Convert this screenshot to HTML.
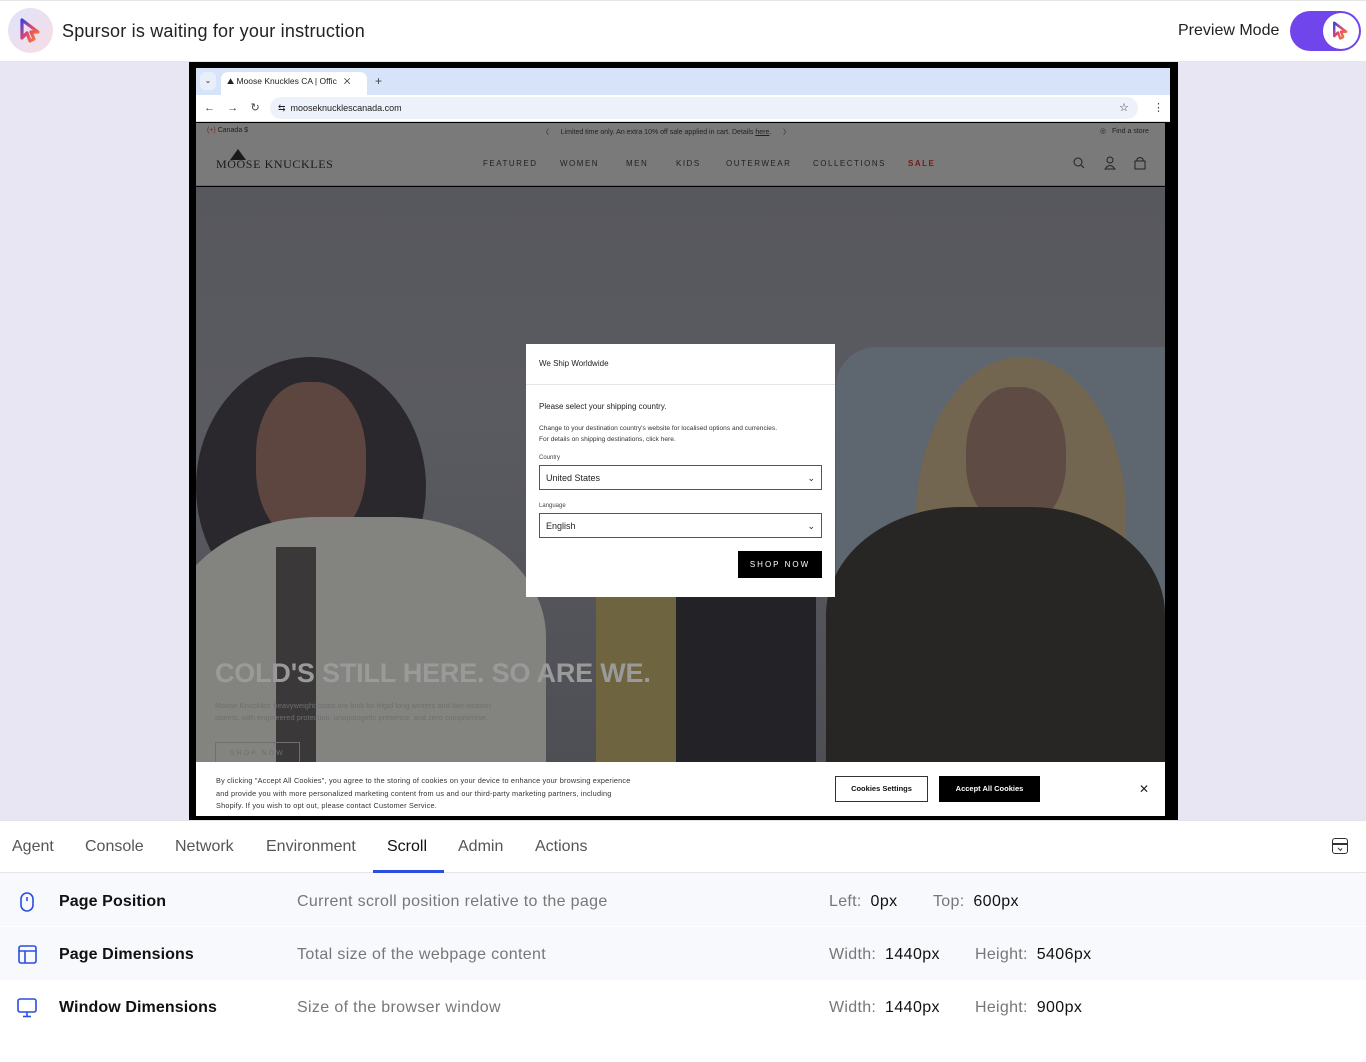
<!DOCTYPE html>
<html><head><meta charset="utf-8"><style>
*{box-sizing:border-box;margin:0;padding:0}
body{width:1366px;height:1062px;overflow:hidden;background:#fff;font-family:"Liberation Sans",sans-serif;position:relative}
.a{position:absolute}
.top{left:0;top:0;width:1366px;height:62px;background:#fff;border-top:1px solid #e5e5e5;border-bottom:1px solid #e6e6ea}
.lav{left:0;top:62px;width:1366px;height:758px;background:#e9e6f3}
.frame{left:189px;top:62px;width:989px;height:758px;background:#000}
.nav span{position:absolute;top:159px;font-size:8px;letter-spacing:1.5px;color:#222}
.tabs span{position:absolute;top:838px;font-size:16px;color:#555}
.row{left:0;width:1366px;height:53px}
.t{font-size:16px;font-weight:bold;color:#111;letter-spacing:.1px}
.d{font-size:16px;color:#777;letter-spacing:.35px}
.k{font-size:16px;color:#777;letter-spacing:.3px}
.v{font-size:16px;color:#111;letter-spacing:.4px}
</style></head><body>
<div class="a top"></div>
<div class="a" style="left:8px;top:8px;width:45px;height:45px;border-radius:50%;background:linear-gradient(135deg,#dfe3fb,#f7dde3)"></div>
<svg class="a" style="left:19px;top:18px" width="24" height="26" viewBox="0 0 24 26"><defs><linearGradient id="g" x1="0" y1="0" x2="1" y2="1"><stop offset="0" stop-color="#3b3fe0"/><stop offset=".5" stop-color="#e8456a"/><stop offset="1" stop-color="#f08a30"/></linearGradient></defs><path d="M3 2 L3 20 L8 15 L11 23 L15 21 L12 14 L19 14 Z" fill="none" stroke="url(#g)" stroke-width="3.2" stroke-linejoin="round"/></svg>
<div class="a" style="left:62px;top:21px;font-size:18px;color:#222;letter-spacing:.2px">Spursor is waiting for your instruction</div>
<div class="a" style="left:1178px;top:22px;font-size:16px;color:#222">Preview Mode</div>
<div class="a" style="left:1290px;top:11px;width:71px;height:40px;border-radius:20px;background:#7046ec"></div>
<div class="a" style="left:1323px;top:13px;width:36px;height:36px;border-radius:50%;background:#fff"></div>
<svg class="a" style="left:1332px;top:21px" width="18" height="20" viewBox="0 0 24 26"><path d="M3 2 L3 20 L8 15 L11 23 L15 21 L12 14 L19 14 Z" fill="none" stroke="url(#g)" stroke-width="3.2" stroke-linejoin="round"/></svg>

<div class="a lav"></div>
<div class="a frame"></div>
<div class="a" style="left:196px;top:68px;width:974px;height:27px;background:#d7e3f8"></div>
<div class="a" style="left:200px;top:72px;width:16px;height:18px;border-radius:5px;background:#e8effb;font-size:8px;text-align:center;line-height:18px;color:#333">⌄</div>
<div class="a" style="left:221px;top:72px;width:146px;height:23px;background:#fff;border-radius:7px 7px 0 0"></div>
<div class="a" style="left:227px;top:76px;font-size:8.5px;color:#222">⛰ Moose Knuckles CA | Offic&nbsp;&nbsp; ✕</div>
<div class="a" style="left:375px;top:74px;font-size:12px;color:#444">+</div>
<div class="a" style="left:196px;top:95px;width:974px;height:27px;background:#fff;border-bottom:1px solid #ddd"></div>
<div class="a" style="left:204px;top:101px;font-size:11px;color:#444">←&nbsp;&nbsp;&nbsp;&nbsp;→&nbsp;&nbsp;&nbsp;&nbsp;↻</div>
<div class="a" style="left:270px;top:97px;width:868px;height:22px;border-radius:11px;background:#edf1fa"></div>
<div class="a" style="left:278px;top:103px;font-size:9px;color:#222">⇆&nbsp;&nbsp;mooseknucklescanada.com</div>
<div class="a" style="left:1119px;top:101px;font-size:11px;color:#333">☆</div>
<div class="a" style="left:1153px;top:101px;font-size:11px;color:#444">⋮</div>
<div class="a" style="left:196px;top:123px;width:969px;height:17px;background:#7a7a7a"></div>
<div class="a" style="left:207px;top:127px;font-size:7px;color:#222"><span style="color:#8a1c1c">(+)</span> Canada $</div>
<div class="a" style="left:542px;top:127px;font-size:7px;color:#222">〈&nbsp;&nbsp;&nbsp;&nbsp;&nbsp; Limited time only. An extra 10% off sale applied in cart. Details <u>here</u>.&nbsp;&nbsp;&nbsp;&nbsp;&nbsp; 〉</div>
<div class="a" style="left:1100px;top:127px;font-size:7px;color:#222">◎&nbsp;&nbsp; Find a store</div>
<div class="a" style="left:196px;top:140px;width:969px;height:46px;background:#7a7a7a;border-bottom:1px solid #666"></div>
<div class="a" style="left:216px;top:157px;font-family:'Liberation Serif',serif;font-size:12px;color:#1a1a1a;letter-spacing:.6px">MOOSE KNUCKLES</div>
<div class="a" style="left:230px;top:149px;width:0;height:0;border-left:8px solid transparent;border-right:8px solid transparent;border-bottom:11px solid #1a1a1a"></div>
<div class="nav">
<span style="left:483px">FEATURED</span><span style="left:560px">WOMEN</span><span style="left:626px">MEN</span><span style="left:676px">KIDS</span><span style="left:726px">OUTERWEAR</span><span style="left:813px">COLLECTIONS</span><span style="left:908px;color:#7a1818;font-weight:bold">SALE</span></div>
<svg class="a" style="left:1072px;top:156px" width="80" height="14" viewBox="0 0 80 14"><g fill="none" stroke="#222" stroke-width="1"><circle cx="6" cy="6" r="4"/><line x1="9" y1="9" x2="12" y2="12"/><circle cx="38" cy="4" r="3"/><path d="M33 13 Q38 6 43 13 Z"/><rect x="63" y="5" width="10" height="8"/><path d="M65 5 V3 Q68 0 71 3 V5"/></g></svg>
<div class="a" style="left:196px;top:187px;width:969px;height:575px;background:linear-gradient(#57585d,#5a5b61 40%,#4e4f54);overflow:hidden">
 <div class="a" style="left:640px;top:160px;width:340px;height:380px;background:#5e6670;border-radius:40px 0 0 0"></div>
 <div class="a" style="left:0;top:170px;width:230px;height:260px;border-radius:50%;background:#2a282d"></div>
 <div class="a" style="left:60px;top:195px;width:110px;height:160px;border-radius:45%;background:#5e4640"></div>
 <div class="a" style="left:-30px;top:330px;width:380px;height:300px;border-radius:40% 40% 0 0;background:#838480"></div>
 <div class="a" style="left:80px;top:360px;width:40px;height:230px;background:#3a3838"></div>
 <div class="a" style="left:400px;top:410px;width:90px;height:180px;background:#6e6440"></div>
 <div class="a" style="left:480px;top:400px;width:140px;height:200px;background:#232327"></div>
 <div class="a" style="left:720px;top:170px;width:210px;height:320px;border-radius:50% 50% 20% 20%;background:#726650"></div>
 <div class="a" style="left:770px;top:200px;width:100px;height:140px;border-radius:45%;background:#5e4c44"></div>
 <div class="a" style="left:630px;top:320px;width:339px;height:270px;border-radius:40% 40% 0 0;background:#282624"></div>
 <div class="a" style="left:19px;top:471px;font-size:27px;font-weight:bold;color:#9a9a9a;letter-spacing:-.2px">COLD'S STILL HERE. SO ARE WE.</div>
 <div class="a" style="left:19px;top:513px;font-size:7.5px;color:#6f6f6f;line-height:12px">Moose Knuckles' heavyweight coats are built for frigid long winters and late-season<br>storms, with engineered protection, unapologetic presence, and zero compromise.</div>
 <div class="a" style="left:19px;top:555px;width:85px;height:24px;border:1px solid #6f6f6f;font-size:7px;color:#6f6f6f;letter-spacing:2px;padding:7px 0 0 14px">SHOP NOW</div>
</div>
<div class="a" style="left:526px;top:344px;width:309px;height:253px;background:#fff"></div>
<div class="a" style="left:526px;top:384px;width:309px;height:1px;background:#e5e5e5"></div>
<div class="a" style="left:539px;top:359px;font-size:8px;color:#222">We Ship Worldwide</div>
<div class="a" style="left:539px;top:402px;font-size:8px;color:#222">Please select your shipping country.</div>
<div class="a" style="left:539px;top:423px;font-size:6.6px;color:#333;line-height:11px">Change to your destination country's website for localised options and currencies.<br>For details on shipping destinations, click here.</div>
<div class="a" style="left:539px;top:455px;font-size:6px;color:#444">Country</div>
<div class="a" style="left:539px;top:465px;width:283px;height:25px;border:1px solid #555;font-size:9px;color:#222;padding:7px 6px">United States<span style="float:right">⌄</span></div>
<div class="a" style="left:539px;top:503px;font-size:6px;color:#444">Language</div>
<div class="a" style="left:539px;top:513px;width:283px;height:25px;border:1px solid #555;font-size:9px;color:#222;padding:7px 6px">English<span style="float:right">⌄</span></div>
<div class="a" style="left:738px;top:551px;width:84px;height:27px;background:#000;color:#fff;font-size:8px;letter-spacing:2px;text-align:center;line-height:27px">SHOP NOW</div>
<div class="a" style="left:196px;top:762px;width:969px;height:54px;background:#fff"></div>
<div class="a" style="left:216px;top:775px;font-size:7.3px;color:#333;line-height:12.5px;letter-spacing:.2px">By clicking "Accept All Cookies", you agree to the storing of cookies on your device to enhance your browsing experience<br>and provide you with more personalized marketing content from us and our third-party marketing partners, including<br>Shopify. If you wish to opt out, please contact Customer Service.</div>
<div class="a" style="left:835px;top:776px;width:93px;height:26px;border:1px solid #333;font-size:7.5px;font-weight:bold;text-align:center;line-height:24px;color:#111">Cookies Settings</div>
<div class="a" style="left:939px;top:776px;width:101px;height:26px;background:#000;font-size:7.5px;font-weight:bold;text-align:center;line-height:26px;color:#fff">Accept All Cookies</div>
<div class="a" style="left:1139px;top:782px;font-size:12px;color:#222">✕</div>
<div class="a" style="left:0;top:820px;width:1366px;height:1px;background:#e5e5e5"></div>
<div class="tabs"><span style="left:12px">Agent</span><span style="left:85px">Console</span><span style="left:175px">Network</span><span style="left:266px">Environment</span><span style="left:387px;color:#111">Scroll</span><span style="left:458px">Admin</span><span style="left:535px">Actions</span></div>
<div class="a" style="left:1332px;top:838px;width:16px;height:16px;border:1.5px solid #333;border-radius:3px"></div>
<div class="a" style="left:1332px;top:843px;width:16px;height:1.5px;background:#333"></div>
<div class="a" style="top:847px;width:4px;height:3px;border-right:1.3px solid #333;border-bottom:1.3px solid #333;transform:rotate(45deg);left:1338px"></div>
<div class="a" style="left:0;top:872px;width:1366px;height:1px;background:#e5e5e5"></div>
<div class="a" style="left:373px;top:870px;width:71px;height:3px;background:#2b4de0"></div>
<div class="a row" style="top:873px;background:#f8f9fd"></div>
<div class="a row" style="top:927px;background:#f8f9fd"></div>
<svg class="a" style="left:19px;top:892px" width="16" height="20" viewBox="0 0 16 20"><rect x="2" y="1" width="12" height="18" rx="6" fill="none" stroke="#2b4de0" stroke-width="1.6"/><line x1="8" y1="5" x2="8" y2="9" stroke="#2b4de0" stroke-width="1.6"/></svg>
<svg class="a" style="left:18px;top:945px" width="19" height="19" viewBox="0 0 19 19"><rect x="1" y="1" width="17" height="17" rx="2" fill="none" stroke="#2b4de0" stroke-width="1.6"/><line x1="1" y1="6" x2="18" y2="6" stroke="#2b4de0" stroke-width="1.6"/><line x1="7" y1="6" x2="7" y2="18" stroke="#2b4de0" stroke-width="1.6"/></svg>
<svg class="a" style="left:17px;top:998px" width="20" height="20" viewBox="0 0 20 20"><rect x="1" y="1" width="18" height="13" rx="2" fill="none" stroke="#2b4de0" stroke-width="1.6"/><line x1="10" y1="14" x2="10" y2="18" stroke="#2b4de0" stroke-width="1.6"/><line x1="6" y1="18.5" x2="14" y2="18.5" stroke="#2b4de0" stroke-width="1.6"/></svg>
<div class="a t" style="left:59px;top:893px">Page Position</div>
<div class="a t" style="left:59px;top:946px">Page Dimensions</div>
<div class="a t" style="left:59px;top:999px">Window Dimensions</div>
<div class="a d" style="left:297px;top:893px">Current scroll position relative to the page</div>
<div class="a d" style="left:297px;top:946px">Total size of the webpage content</div>
<div class="a d" style="left:297px;top:999px">Size of the browser window</div>
<div class="a" style="left:829px;top:893px"><span class="k">Left:</span>&nbsp; <span class="v">0px</span></div>
<div class="a" style="left:933px;top:893px"><span class="k">Top:</span>&nbsp; <span class="v">600px</span></div>
<div class="a" style="left:829px;top:946px"><span class="k">Width:</span>&nbsp; <span class="v">1440px</span></div>
<div class="a" style="left:975px;top:946px"><span class="k">Height:</span>&nbsp; <span class="v">5406px</span></div>
<div class="a" style="left:829px;top:999px"><span class="k">Width:</span>&nbsp; <span class="v">1440px</span></div>
<div class="a" style="left:975px;top:999px"><span class="k">Height:</span>&nbsp; <span class="v">900px</span></div>
</body></html>
